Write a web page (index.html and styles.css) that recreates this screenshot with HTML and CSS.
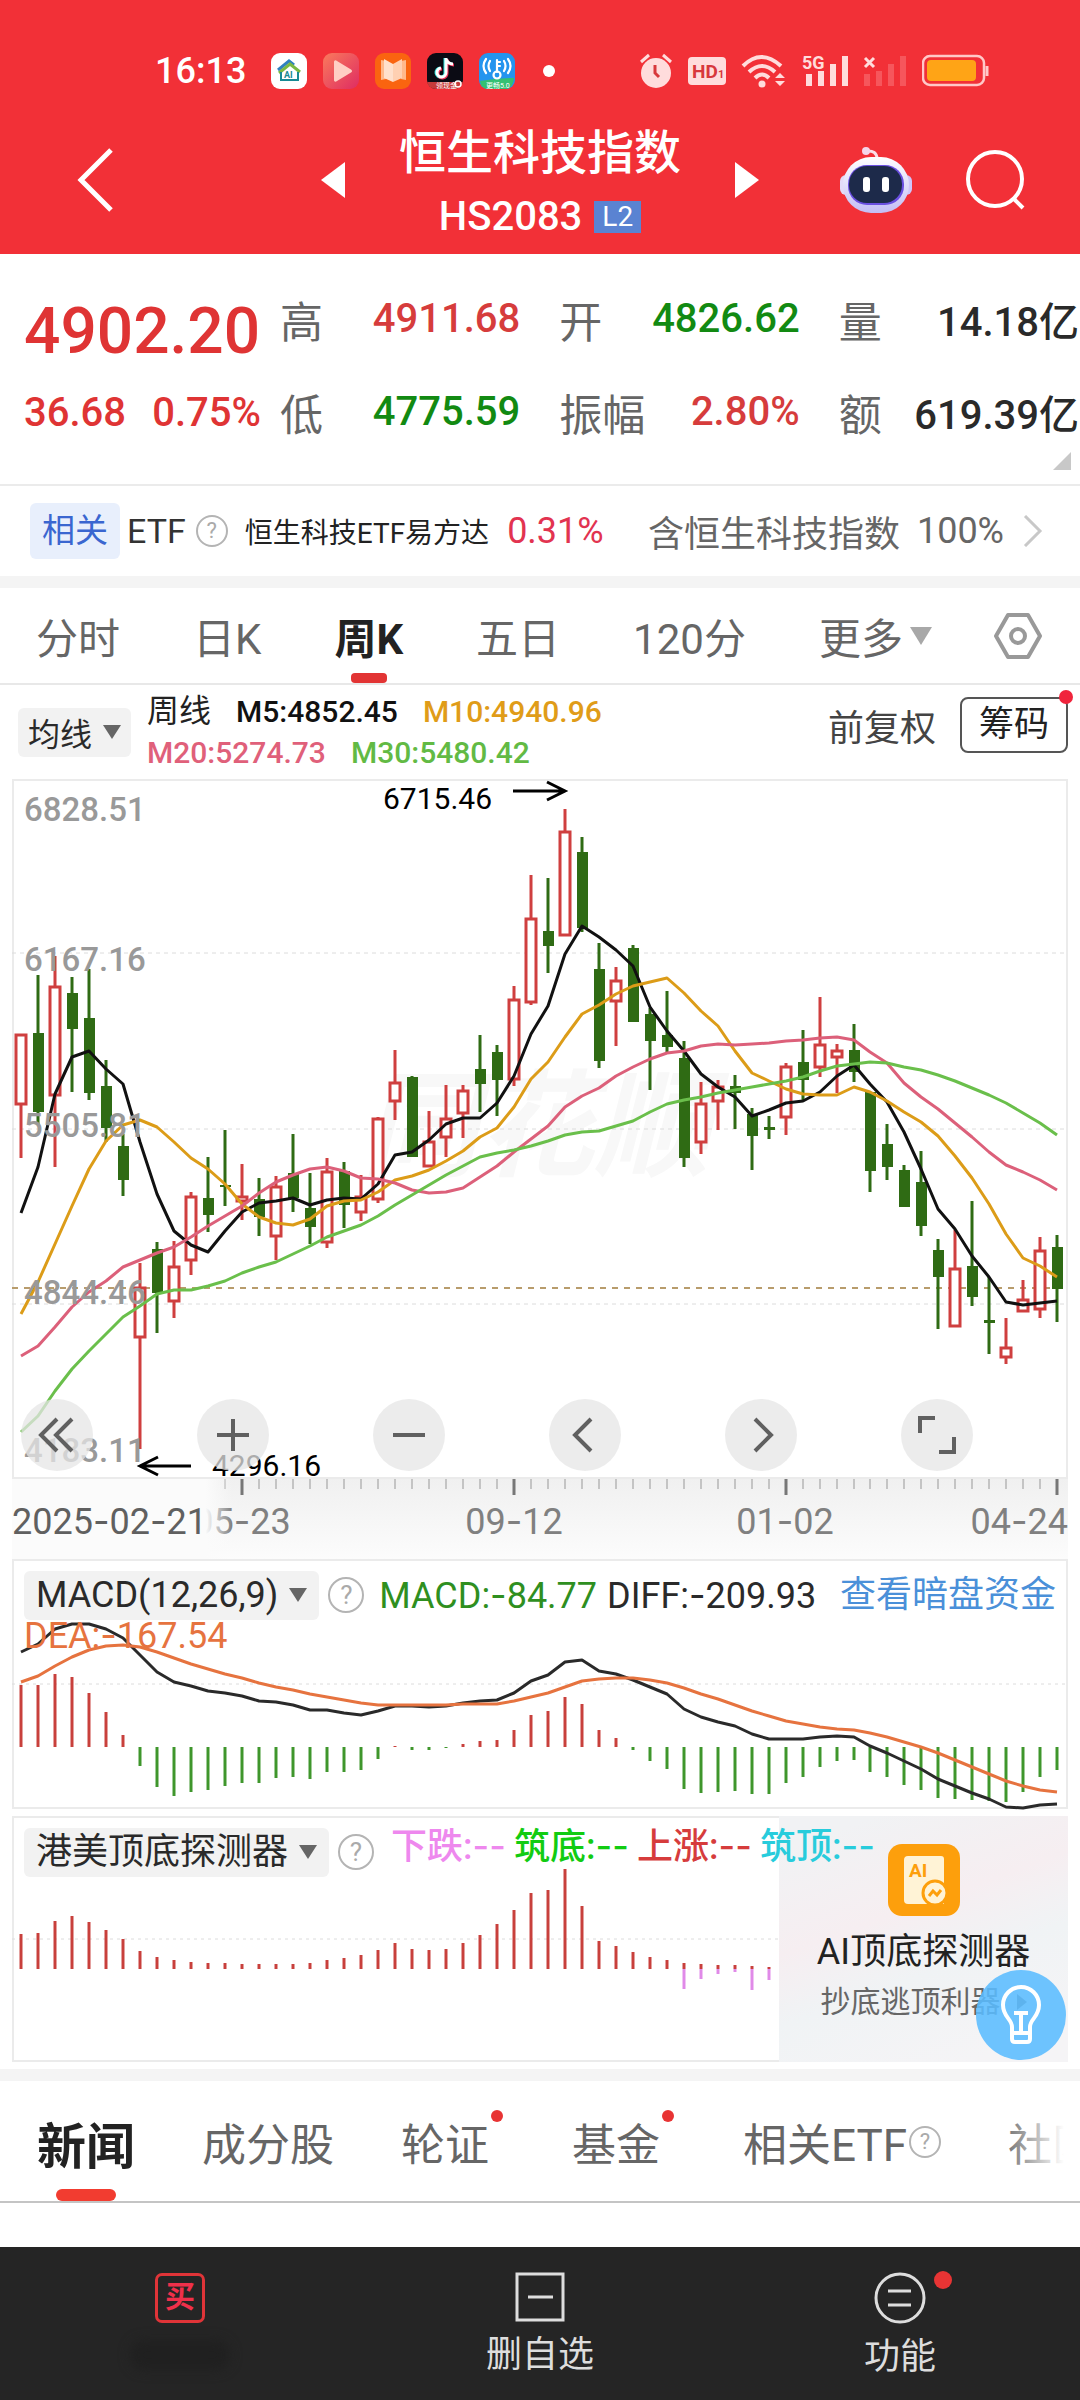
FILE: index.html
```html
<!DOCTYPE html>
<html lang="zh-CN">
<head>
<meta charset="utf-8">
<meta name="viewport" content="width=device-width, initial-scale=1">
<title>恒生科技指数 HS2083</title>
<link rel="stylesheet" href="styles.css">
</head>
<body>
<header class="header">
  <div class="status">
    <span class="status-time">16:13</span>
    <div class="status-apps">
      <svg viewBox="0 0 36 36" width="36" height="36"><rect width="36" height="36" rx="9" fill="#fff"/><path d="M7 17 18 8l5 4" fill="none" stroke="#2f80c0" stroke-width="3"/><path d="M8 20 19 11l10 8" fill="none" stroke="#7ab843" stroke-width="3"/><path d="M10 19v8h17v-8" fill="none" stroke="#178a94" stroke-width="2"/><text x="13" y="25" font-size="9" font-weight="700" fill="#178a94">AI</text></svg>
      <svg viewBox="0 0 36 36" width="36" height="36"><defs><linearGradient id="play" x1="0" y1="0" x2="1" y2="1"><stop offset="0" stop-color="#fa7a5c"/><stop offset="1" stop-color="#df2c62"/></linearGradient></defs><rect width="36" height="36" rx="9" fill="url(#play)"/><path d="M11 8.500q1-2 3-.6l14 8.500q2 1.600 0 3.200l-14 8.500q-2 1.400-3-.6z" fill="#ffcfc4"/></svg>
      <svg viewBox="0 0 36 36" width="36" height="36"><rect width="36" height="36" rx="9" fill="#fa6410"/><path d="M6 7l5 1v18l-5 1zM31 7l-5 1v18l5 1z" fill="#ffb98c"/><path d="M9 6l9 5v18l-9-4z" fill="#ffe0cc"/><path d="M27 6l-9 5v18l9-4z" fill="#ffd0b2"/></svg>
      <svg viewBox="0 0 36 36" width="36" height="36"><rect width="36" height="36" rx="9" fill="#0b0b14"/><g fill="none" stroke-width="3"><path d="M18 5v14a4.500 4.500 0 1 1-5-4M18 6q2 5 7 5" stroke="#2ee6e0"/><path d="M20 6v14a4.500 4.500 0 1 1-5-4M20 7q2 5 7 5" stroke="#f0355c"/><path d="M19 5v14a4.500 4.500 0 1 1-5-4M19 6q2 5 7 5" stroke="#fff"/></g><path d="M0 29h36q-2 7-9 7H9q-7 0-9-7z" fill="#c53a3a"/><text x="9" y="35" font-size="7" fill="#fff">领现金</text><circle cx="31" cy="31" r="3" fill="none" stroke="#fff" stroke-width="1.500"/></svg>
      <svg viewBox="0 0 36 36" width="36" height="36"><rect width="36" height="36" rx="9" fill="#2494ee"/><path d="M1 28q17-3 34-3-1 11-9 11H9q-7 0-8-8z" fill="#34c072"/><g fill="none" stroke="#fff" stroke-width="2.200" stroke-linecap="round"><path d="M11 8q-3 5 0 10M7 6q-5 7 0 14M25 8q3 5 0 10M29 6q5 7 0 14"/><path d="M18 7v12M18 9h3M18 13h3"/><circle cx="18" cy="22" r="3.500"/></g><text x="7" y="35" font-size="7" fill="#fff">更畅5.0</text></svg>
    </div>
    <span class="status-dot"></span>
    <div class="status-system">
      <svg viewBox="0 0 34 36" width="34" height="36"><circle cx="17" cy="20" r="15" fill="#ffdcdc"/><path d="M2 9l8-7M32 9l-8-7" stroke="#ffdcdc" stroke-width="3"/><path d="M16 12v8l4 4" fill="none" stroke="#d8383c" stroke-width="3"/></svg>
      <svg viewBox="0 0 38 36" width="38" height="36"><rect y="4" width="38" height="28" rx="4" fill="#ffdcdc"/><text x="4" y="25" font-size="19" font-weight="700" fill="#d8383c">HD</text><text x="30" y="25" font-size="11" font-weight="700" fill="#d8383c">1</text></svg>
      <svg viewBox="0 0 46 36" width="46" height="36"><g fill="none" stroke="#ffdcdc" stroke-width="4"><path d="M2 13q18-18 38 0M8 19q13-12 26 0M14 25q7-7 14 0"/></g><circle cx="21" cy="31" r="3.500" fill="#ffdcdc"/><path d="M34 25l5-5 5 5zM34 28l5 5 5-5z" fill="#ffdcdc"/></svg>
      <svg viewBox="0 0 46 36" width="46" height="36"><text x="0" y="16" font-size="18" font-weight="700" fill="#ffdcdc">5G</text><path d="M4 21h6v12H4zM16 18h6v15h-6zM28 11h6v22h-6zM40 3h6v30h-6z" fill="#ffdcdc"/></svg>
      <svg viewBox="0 0 44 36" width="44" height="36"><path d="M2 5l9 9M11 5l-9 9" stroke="#ffdcdc" stroke-width="3"/><path d="M1 21h6v12H1zM13 18h6v15h-6zM25 11h6v22h-6zM37 3h6v30h-6z" fill="#f6565c"/></svg>
      <svg viewBox="0 0 68 36" width="68" height="36"><rect x="1" y="3" width="61" height="29" rx="7" fill="none" stroke="#ffc8c8" stroke-width="2.500"/><rect x="5" y="7" width="49" height="21" rx="4" fill="#ffa416"/><path d="M65 13v10" stroke="#ffc8c8" stroke-width="3"/></svg>
    </div>
  </div>
  <nav class="nav">
    <div class="nav-left">
      <button class="bare" aria-label="返回"><svg viewBox="0 0 38 66" width="38" height="66"><path d="M34 3 4 33l30 30" fill="none" stroke="#fff" stroke-width="5"/></svg></button>
      <button class="bare" aria-label="上一个"><svg viewBox="0 0 24 36" width="24" height="36"><path d="M24 0v36L0 18z" fill="#fff"/></svg></button>
    </div>
    <div class="nav-title">
      <h1>恒生科技指数</h1>
      <p>HS2083 <span class="level">L2</span></p>
    </div>
    <div class="nav-right">
      <button class="bare" aria-label="下一个"><svg viewBox="0 0 24 36" width="24" height="36"><path d="M0 0v36l24-18z" fill="#fff"/></svg></button>
      <div class="nav-tools">
        <button class="bare" aria-label="智能助手"><svg viewBox="0 0 72 66" width="72" height="66"><defs><linearGradient id="bot" x1="0" y1="0" x2="0" y2="1"><stop offset="0" stop-color="#fff"/><stop offset="1" stop-color="#c3bdf5"/></linearGradient></defs><path d="M26 4q11-1 11 8" fill="none" stroke="#fbdfe8" stroke-width="3"/><circle cx="26" cy="4" r="4" fill="#f5d5ea"/><rect x="0" y="28" width="12" height="20" rx="6" fill="#e2daf8"/><rect x="60" y="28" width="12" height="20" rx="6" fill="#cfc6fa"/><rect x="3" y="10" width="66" height="56" rx="28" fill="url(#bot)"/><rect x="8" y="18" width="56" height="40" rx="19" fill="#6a4fe0"/><rect x="9" y="19" width="53" height="37" rx="18" fill="#1d2a4a"/><rect x="23" y="30" width="7" height="15" rx="3" fill="#fff"/><rect x="42" y="30" width="7" height="15" rx="3" fill="#fff"/></svg></button>
        <button class="bare" aria-label="搜索"><svg viewBox="0 0 60 60" width="60" height="60"><circle cx="29" cy="29" r="27" fill="none" stroke="#fff" stroke-width="4"/><path d="M47 48l10 10" stroke="#fff" stroke-width="4"/></svg></button>
      </div>
    </div>
  </nav>
</header>

<main class="main">
<section class="quote">
  <div class="price">
    <strong>4902.20</strong>
    <p><span>36.68</span><span>0.75%</span></p>
  </div>
  <dl class="stats">
    <div><dt>高</dt><dd class="up">4911.68</dd></div>
    <div><dt>开</dt><dd class="down">4826.62</dd></div>
    <div><dt>量</dt><dd>14.18亿</dd></div>
    <div><dt>低</dt><dd class="down">4775.59</dd></div>
    <div><dt>振幅</dt><dd class="up">2.80%</dd></div>
    <div><dt>额</dt><dd>619.39亿</dd></div>
  </dl>
  <svg class="quote-corner" viewBox="0 0 18 18" width="18" height="18"><path d="M18 0v18H0z" fill="#c8c8c8"/></svg>
</section>

<section class="etf">
  <span class="etf-chip">相关</span>
  <span class="etf-label">ETF</span>
  <span class="help help-s">?</span>
  <a class="etf-name" href="#">恒生科技ETF易方达</a>
  <span class="etf-change">0.31%</span>
  <span class="etf-share">含恒生科技指数</span>
  <span class="etf-share">100%</span>
  <svg class="etf-arrow" viewBox="0 0 20 32" width="20" height="32"><path d="M2 1l15 15L2 31" fill="none" stroke="#c8c8c8" stroke-width="3"/></svg>
</section>

<nav class="periods">
  <button class="tab">分时</button>
  <button class="tab">日K</button>
  <button class="tab tab-on">周K</button>
  <button class="tab">五日</button>
  <button class="tab">120分</button>
  <button class="tab">更多<svg viewBox="0 0 22 18" width="22" height="18"><path d="M0 0h22L11 18z" fill="#a8a8a8"/></svg></button>
  <button class="bare gear" aria-label="设置"><svg viewBox="0 0 50 48" width="50" height="48"><path d="M15 3h20l12 21-12 21H15L3 24z" fill="none" stroke="#999" stroke-width="4" stroke-linejoin="round"/><circle cx="25" cy="24" r="7" fill="none" stroke="#999" stroke-width="4"/></svg></button>
</nav>

<section class="legend">
  <button class="chip chip-s">均线<svg viewBox="0 0 18 14" width="18" height="14"><path d="M0 0h18L9 14z" fill="#666"/></svg></button>
  <div class="averages">
    <p><span class="cycle">周线</span><span class="m5">M5:4852.45</span><span class="m10">M10:4940.96</span></p>
    <p><span class="m20">M20:5274.73</span><span class="m30">M30:5480.42</span></p>
  </div>
  <button class="bare adjust">前复权</button>
  <button class="chips-btn">筹码<i class="dot"></i></button>
</section>

<section class="kline">
  <svg id="kline" class="plot" viewBox="0 0 1056 700" role="img" aria-label="周K线图">
    <rect x="1" y="1" width="1054" height="698" fill="none" stroke="#ebebeb" stroke-width="2"/>
    <text class="watermark" x="350" y="388">同花顺</text>
    <path d="M0 174h1056M0 350h1056M0 525h1056" stroke="#dcdcdc" stroke-dasharray="4 4"/>
    <path d="M0 509h1056" stroke="#b89c6c" stroke-width="2" stroke-dasharray="6 6"/>
    <g id="candles"></g>
    <g id="averages"></g>
    <g class="scale"><text x="12" y="42">6828.51</text><text x="12" y="192">6167.16</text><text x="12" y="358">5505.81</text><text x="12" y="525">4844.46</text><text x="12" y="683">4183.11</text></g>
    <g class="mark"><text x="371" y="30">6715.46</text><text x="200" y="697">4296.16</text></g>
    <path d="M501 12h51M535 3l18 9-18 9M179 687h-50M146 678l-18 9 18 9" fill="none" stroke="#000" stroke-width="3"/>
  </svg>
  <div class="controls">
    <button aria-label="最早"><svg viewBox="0 0 36 36"><path d="M18 2 2 18l16 16M33 2 17 18l16 16"/></svg></button>
    <button aria-label="放大"><svg viewBox="0 0 36 36"><path d="M2 18h32M18 2v32"/></svg></button>
    <button aria-label="缩小"><svg viewBox="0 0 36 36"><path d="M2 18h32"/></svg></button>
    <button aria-label="左移"><svg viewBox="0 0 36 36"><path d="M24 2 8 18l16 16"/></svg></button>
    <button aria-label="右移"><svg viewBox="0 0 36 36"><path d="M12 2l16 16-16 16"/></svg></button>
    <button aria-label="全屏"><svg viewBox="0 0 36 36"><path d="M1 16V1h15M35 20v15H20"/></svg></button>
  </div>
</section>

<section class="axis">
  <svg class="plot" viewBox="0 0 1056 80" role="img" aria-label="日期">
    <defs>
      <linearGradient id="shade" x1="0" y1="0" x2="0" y2="1"><stop offset="0" stop-color="#f0f0f0"/><stop offset="1" stop-color="#fcfcfc"/></linearGradient>
      <linearGradient id="fade"><stop offset="0.880" stop-color="#fbfbfb"/><stop offset="1" stop-color="#fbfbfb" stop-opacity="0"/></linearGradient>
    </defs>
    <rect width="1056" height="80" fill="url(#shade)"/>
    <g id="ticks"></g>
    <text class="date" x="230" y="55" text-anchor="middle">05<tspan class="dash">-</tspan>23</text>
    <text class="date" x="502" y="55" text-anchor="middle">09<tspan class="dash">-</tspan>12</text>
    <text class="date" x="773" y="55" text-anchor="middle">01<tspan class="dash">-</tspan>02</text>
    <text class="date" x="1056" y="55" text-anchor="end">04<tspan class="dash">-</tspan>24</text>
    <rect width="220" height="80" fill="url(#fade)"/>
    <text class="date date-first" x="0" y="55">2025<tspan class="dash">-</tspan>02<tspan class="dash">-</tspan>21</text>
  </svg>
</section>

<section class="panel">
  <svg class="plot" viewBox="0 0 1056 250" role="img" aria-label="MACD">
    <rect x="1" y="1" width="1054" height="248" fill="none" stroke="#ebebeb" stroke-width="2"/>
    <path d="M0 125h1056" stroke="#dcdcdc" stroke-dasharray="3 4"/>
    <g id="macd"></g>
  </svg>
  <div class="panel-head">
    <button class="chip">MACD(12,26,9)<svg viewBox="0 0 18 14" width="18" height="14"><path d="M0 0h18L9 14z" fill="#666"/></svg></button>
    <span class="help">?</span>
    <span class="macd-val">MACD:<span class="dash">-</span>84.77</span>
    <span class="diff-val">DIFF:<span class="dash">-</span>209.93</span>
    <a class="dark-pool" href="#">查看暗盘资金</a>
  </div>
  <p class="dea-val">DEA:<span class="dash">-</span>167.54</p>
</section>

<section class="panel">
  <svg class="plot" viewBox="0 0 1056 246" role="img" aria-label="港美顶底探测器">
    <rect x="1" y="1" width="1054" height="244" fill="none" stroke="#ebebeb" stroke-width="2"/>
    <path d="M0 123h767" stroke="#dcdcdc" stroke-dasharray="3 4"/>
    <g id="detector"></g>
  </svg>
  <a class="ai-card" href="#">
    <svg viewBox="0 0 72 72" width="72" height="72"><rect width="72" height="72" rx="14" fill="#fd9f0c"/><path d="M20 12h33q3 0 3 3v45H20q-4 0-4-4V16q0-4 4-4z" fill="#fff3d6"/><text x="21" y="33" font-size="19" font-weight="700" fill="#fd9f0c">AI</text><circle cx="47" cy="49" r="12" fill="#fff3d6" stroke="#fd9f0c" stroke-width="3"/><path d="M41 52l4-5 4 4 4-5" fill="none" stroke="#fd9f0c" stroke-width="3"/></svg>
    <strong>AI顶底探测器</strong>
    <span>抄底逃顶利器<svg viewBox="0 0 10 16" width="10" height="16"><path d="M0 0l10 8-10 8z" fill="#777"/></svg></span>
  </a>
  <div class="panel-head">
    <button class="chip">港美顶底探测器<svg viewBox="0 0 18 14" width="18" height="14"><path d="M0 0h18L9 14z" fill="#666"/></svg></button>
    <span class="help">?</span>
    <p class="signals"><span class="s1">下跌:<b>--</b></span><span class="s2">筑底:<b>--</b></span><span class="s3">上涨:<b>--</b></span><span class="s4">筑顶:<b>--</b></span></p>
  </div>
  <button class="bulb" aria-label="提示"><svg viewBox="0 0 42 60" width="42" height="60"><path d="M12 42c0-8-9-10-9-22a18 18 0 0 1 36 0c0 12-9 14-9 22v12q0 3-3 3H15q-3 0-3-3zM12 48h18M14 28h14M21 28v18" fill="none" stroke="#fff" stroke-width="4"/></svg></button>
</section>

<nav class="sections">
  <button class="tab tab-on">新闻</button>
  <button class="tab">成分股</button>
  <button class="tab tab-new">轮证<i class="dot"></i></button>
  <button class="tab tab-new">基金<i class="dot"></i></button>
  <button class="tab">相关ETF<span class="help help-s">?</span></button>
  <button class="tab">社区</button>
</nav>
</main>

<footer class="bottom">
  <button class="bottom-item"><span class="buy">买</span><span class="smudge"></span></button>
  <button class="bottom-item"><svg viewBox="0 0 50 50" width="50" height="50"><path d="M2 2h46v46H2zM13 25h25" fill="none" stroke="#ddd" stroke-width="3"/></svg><span>删自选</span></button>
  <button class="bottom-item"><span class="round"><svg viewBox="0 0 52 52" width="52" height="52"><circle cx="26" cy="26" r="24" fill="none" stroke="#ddd" stroke-width="3"/><path d="M14 19h23M14 33h23" stroke="#ddd" stroke-width="3"/></svg><i class="dot"></i></span><span>功能</span></button>
</footer>
<script src="chart.js"></script>
</body>
</html>
```
FILE: styles.css
```css
* { box-sizing: border-box; }
body {
  margin: 0;
  min-height: 100vh;
  display: flex;
  flex-direction: column;
  background: #fff;
  color: #333;
  font-family: Roboto, "Noto Sans CJK SC", sans-serif;
  font-size: 36px;
  overflow-x: hidden;
}
h1, p, dl, dd { margin: 0; }
button { font: inherit; color: inherit; border: 0; background: none; padding: 0; white-space: nowrap; }
a { color: inherit; text-decoration: none; }
svg { display: block; }
.bare { display: block; }
.dot { position: absolute; width: 14px; height: 14px; border-radius: 50%; background: #e83434; }
.dash { font-family: Inter, sans-serif; }

/* Header */
.header { background: #f23037; color: #fff; }
.status { display: flex; align-items: center; padding: 50px 90px 0 155px; height: 92px; }
.status-time { font-weight: 500; }
.status-apps { display: flex; gap: 16px; margin-left: 25px; }
.status-dot { width: 12px; height: 12px; border-radius: 50%; background: #fff; margin-left: 28px; }
.status-system { display: flex; gap: 15px; margin-left: auto; }
.nav { display: grid; grid-template-columns: 1fr 390px 1fr; align-items: center; padding-top: 14px; height: 162px; }
.nav-left { display: flex; align-items: center; justify-content: space-between; padding-left: 77px; }
.nav-title { display: flex; flex-direction: column; align-items: center; gap: 14px; white-space: nowrap; }
.nav-title h1 { font-size: 47px; line-height: 60px; font-weight: 500; }
.nav-title p { display: flex; align-items: center; gap: 12px; font-size: 40px; line-height: 40px; font-weight: 500; }
.level { background: #5a83d2; font-size: 28px; line-height: 32px; padding: 0 8px; font-weight: 400; }
.nav-right { display: flex; align-items: center; justify-content: space-between; padding-right: 54px; }
.nav-tools { display: flex; align-items: center; gap: 54px; }

/* Quote */
.quote { position: relative; display: grid; grid-template-columns: 237px 1fr; gap: 19px; padding: 36px 1px 0 24px; height: 232px; border-bottom: 2px solid #ebebeb; }
.price { color: #df3434; font-weight: 500; }
.price strong { display: block; font-size: 64px; line-height: 84px; font-weight: 500; }
.price p { display: flex; justify-content: space-between; font-size: 40px; line-height: 78px; }
.stats { display: grid; grid-template-columns: 1fr 1fr 1fr; column-gap: 39px; grid-auto-rows: 93px; margin-top: -18px; }
.stats div { display: flex; justify-content: space-between; align-items: center; white-space: nowrap; }
.stats dt { font-size: 43px; color: #666; }
.stats dd { font-size: 40px; font-weight: 500; color: #2a2a2a; }
.stats .up { color: #d63c3c; }
.stats .down { color: #128a12; }
.quote-corner { position: absolute; right: 9px; bottom: 14px; }

/* Related fund */
.etf { display: flex; align-items: center; height: 90px; padding: 0 37px 0 30px; white-space: nowrap; }
.etf-chip { background: #e8effc; color: #3a66d0; font-size: 33px; line-height: 56px; padding: 0 12px; border-radius: 6px; }
.etf-label { margin-left: 7px; font-size: 34px; }
.help { display: flex; align-items: center; justify-content: center; width: 36px; height: 36px; border: 2px solid #b4b4b4; border-radius: 50%; color: #aaa; font-size: 26px; line-height: 26px; flex: none; }
.help-s { width: 32px; height: 32px; font-size: 22px; }
.etf .help { margin-left: 10px; }
.etf-name { margin-left: 17px; font-size: 28px; color: #222; }
.etf-change { margin-left: 18px; color: #e23350; }
.etf-share { margin-left: auto; color: #666; }
.etf-share + .etf-share { margin-left: 17px; }
.etf-arrow { margin-left: 19px; }

/* Period tabs */
.periods { display: flex; gap: 73px; align-items: center; height: 109px; padding: 0 34px 0 36px; border-top: 12px solid #f4f4f4; border-bottom: 2px solid #e8e8e8; }
.gear { margin-left: auto; margin-right: 0; }
.tab { position: relative; color: #666; font-size: 42px; height: 100%; display: flex; align-items: center; flex: none; }
.tab-on { color: #222; font-weight: 700; }
.tab-on::after { content: ""; position: absolute; left: 50%; bottom: 0; width: 36px; height: 10px; margin-left: -18px; border-radius: 4px; background: #e23434; }
.periods .tab svg { margin-left: 7px; }
.periods { column-gap: 73px; }
.periods .gear { margin-left: -12px; }

/* Average legend */
.legend { display: flex; align-items: center; height: 94px; padding: 0 12px 0 18px; }
.chip { display: flex; align-items: center; gap: 11px; height: 49px; padding: 0 12px; background: #f2f2f2; border-radius: 6px; color: #2a2a2a; }
.chip-s { font-size: 32px; padding: 0 10px; }
.averages { margin-left: 16px; font-size: 30px; font-weight: 500; }
.averages p { display: flex; align-items: center; gap: 25px; line-height: 41px; }
.cycle { font-size: 32px; font-weight: 400; color: #222; }
.m5 { color: #111; }
.m10 { color: #e09c18; }
.m20 { color: #e0607a; }
.m30 { color: #62ba44; }
.adjust { margin-left: auto; margin-bottom: 14px; color: #444; }
.chips-btn { position: relative; margin-left: 24px; margin-bottom: 14px; width: 108px; height: 56px; border: 2px solid #555; border-radius: 8px; font-size: 35px; line-height: 50px; color: #222; }
.chips-btn .dot { top: -9px; right: -7px; background: #f0243c; }

/* Charts */
.plot { width: 100%; height: auto; overflow: visible; }
.kline { position: relative; margin: 0 12px; }
.watermark { font-size: 116px; font-weight: 700; font-style: italic; fill: #f8f8f8; }
.scale { font-size: 33px; font-weight: 500; fill: #999; }
.mark { font-size: 30px; fill: #000; }
.controls { position: absolute; left: 9px; right: 95px; bottom: 8px; display: flex; justify-content: space-between; }
.controls button { width: 72px; height: 72px; border-radius: 50%; background: rgba(230, 230, 230, 0.750); display: grid; place-items: center; }
.controls svg { width: 36px; height: 36px; fill: none; stroke: #606060; stroke-width: 4; overflow: visible; }
.axis { margin: 0 12px; }
.date { font-size: 36px; fill: #808080; }
.date-first { fill: #606060; }
.panel { position: relative; margin: 0 12px 7px; white-space: nowrap; }
.panel-head { position: absolute; left: 12px; right: 12px; top: 12px; display: flex; align-items: center; height: 48px; line-height: 48px; }
.panel-head .help { margin-left: 9px; }
.macd-val { margin-left: 15px; color: #2f8f1f; }
.diff-val { margin-left: 10px; color: #2a2a2a; }
.dark-pool { margin-left: auto; color: #4a90d9; }
.dea-val { position: absolute; left: 12px; top: 56px; line-height: 40px; color: #e6733f; }
.signals { display: flex; margin-left: 17px; margin-top: -12px; font-weight: 500; }
.signals span { width: 123px; }
.signals b { font-family: Inter, sans-serif; font-weight: 500; }
.s1 { color: #ee88ee; }
.s2 { color: #12cc12; }
.s3 { color: #d63c3c; }
.s4 { color: #28ccdc; }
.ai-card { position: absolute; right: 0; top: 0; bottom: 0; width: 289px; padding-top: 28px; display: flex; flex-direction: column; align-items: center; background: linear-gradient(160deg, #f1f2f4 10%, #f6eef1 40%, #f0f3f5 60%, #f5f4f6 90%); }
.ai-card strong { font-weight: 400; color: #222; line-height: 44px; margin-top: 14px; }
.ai-card span { display: flex; align-items: center; gap: 16px; font-size: 30px; line-height: 40px; color: #666; margin-top: 8px; }
.bulb { position: absolute; right: 2px; bottom: 2px; width: 90px; height: 90px; border-radius: 50%; background: rgba(90, 188, 255, 0.880); display: grid; place-items: center; }

/* Content tabs */
.sections { position: relative; display: flex; height: 134px; padding: 2px 0 0 37px; gap: 67px; border-top: 12px solid #f4f4f4; border-bottom: 2px solid #c4c4c4; overflow: hidden; }
.sections::after { content: ""; position: absolute; top: 0; right: 0; bottom: 0; width: 80px; background: linear-gradient(to right, rgba(255, 255, 255, 0), #fff 80%); }
.sections .tab { font-size: 44px; }
.sections .tab-on { font-size: 49px; }
.sections .tab-on::after { width: 60px; height: 12px; margin-left: -30px; border-radius: 6px; background: #f23c30; }
.sections .tab-new { padding-right: 16px; }
.sections .dot { top: 27px; right: 2px; width: 12px; height: 12px; }
.sections .help { margin-left: 2px; }

/* Bottom bar */
.bottom { margin-top: auto; height: 153px; background: #252525; color: #ddd; display: grid; grid-template-columns: 1fr 1fr 1fr; }
.bottom-item { display: flex; flex-direction: column; align-items: center; padding-top: 25px; line-height: 52px; gap: 7px; }
.buy { width: 50px; height: 50px; margin-top: 1px; border: 3px solid #e03438; border-radius: 7px; color: #f0304a; font-size: 30px; line-height: 42px; font-weight: 700; }
.smudge { width: 100px; height: 30px; margin-top: 10px; border-radius: 15px; background: #202020; filter: blur(6px); }
.round { position: relative; }
.round .dot { width: 18px; height: 18px; right: -26px; top: -1px; }
```
FILE: chart.js
```js
// Horizontal position of the n-th week in a plot 1056 units wide.
const x = n => Math.round(9 + n * 16.99);

const add = (id, markup) => {
  document.getElementById(id).innerHTML += markup;
};

const curve = (values, color) =>
  `<polyline points="${values.map((v, n) => `${x(n)},${v}`).join(' ')}" fill="none" stroke="${color}" stroke-width="3" stroke-linejoin="round"/>`;

const bar = (n, from, to, color) =>
  `<path d="M${x(n)} ${from}V${to}" stroke="${color}" stroke-width="3"/>`;

// direction, high, body top, body bottom, low
const candles = [
  ['r',255,255,326,379],['g',196,254,333,345],['r',177,207,317,388],['g',198,214,250,313],['g',190,239,314,321],
  ['g',281,307,349,363],['g',355,367,401,417],['r',484,508,559,670],['g',463,470,514,554],['r',462,487,523,539],
  ['r',413,417,482,496],['g',378,419,436,453],['g',351,406,408,427],['r',385,417,423,441],['g',399,420,438,457],
  ['r',397,407,458,481],['g',355,394,419,433],['g',394,429,448,465],['r',379,392,464,469],['g',383,392,426,449],
  ['r',396,417,434,442],['r',338,339,421,424],['r',271,303,323,341],['g',297,298,378,378],['r',332,362,388,388],
  ['r',306,339,359,378],['r',306,311,335,359],['g',256,290,305,333],['g',266,273,301,337],['r',207,220,301,307],
  ['r',96,139,224,226],['g',99,152,167,194],['r',30,52,157,157],['g',58,73,149,153],['g',164,190,282,289],
  ['r',188,201,223,267],['g',166,169,243,243],['g',229,235,262,311],['g',212,256,268,273],['g',262,279,379,388],
  ['r',303,324,364,375],['r',301,307,323,351],['g',296,307,314,350],['g',329,335,357,391],['g',337,348,351,360],
  ['r',284,287,339,356],['g',251,283,301,321],['r',218,265,289,298],['r',265,271,279,314],['g',245,271,293,303],
  ['g',313,313,392,413],['g',345,365,388,401],['g',386,391,428,428],['g',372,403,447,457],['g',460,471,498,550],
  ['r',451,489,548,548],['g',422,487,518,527],['g',498,541,544,575],['r',539,568,579,585],['r',501,520,533,533],
  ['r',458,471,531,539],['g',456,468,510,543]
];

add('candles', candles.map(([dir, high, top, bottom, low], n) => {
  const c = x(n);
  return dir === 'g'
    ? `<path d="M${c} ${high}V${low}" stroke="#2f6b14" stroke-width="3"/><rect x="${c - 5}" y="${top}" width="11" height="${bottom - top}" fill="#2f6b14"/>`
    : `<path d="M${c} ${high}V${top}M${c} ${bottom}V${low}" stroke="#cf3f3f" stroke-width="3"/><rect x="${c - 5}" y="${top + 1}" width="10" height="${bottom - top - 2}" fill="#fff" stroke="#cf3f3f" stroke-width="3"/>`;
}).join(''));

const m30 = [653,637,612,590,572,555,538,527,515,511,511,507,502,494,488,483,475,467,458,452,446,437,426,416,406,396,387,378,374,371,367,362,356,353,352,347,342,333,325,321,318,314,311,308,305,302,298,292,287,285,283,284,288,291,296,302,309,316,324,334,344,356];
const m20 = [577,567,548,528,513,502,488,481,474,468,458,447,437,427,414,403,396,390,388,392,399,400,404,411,414,413,409,398,387,373,360,347,328,317,309,297,288,280,274,272,267,265,266,265,264,262,261,259,258,261,273,284,304,318,330,344,358,373,386,393,401,411];
const m10 = [535,503,465,427,390,362,346,341,348,363,379,390,405,425,438,444,446,440,427,422,421,413,401,397,391,382,372,358,349,328,300,283,258,235,226,215,207,203,199,214,232,247,272,294,302,310,315,316,316,308,313,322,333,343,357,377,399,425,455,479,487,498];
const m5 = [434,388,315,278,272,290,305,363,415,452,466,473,452,433,424,422,419,426,421,419,420,405,376,373,361,345,339,339,324,297,255,227,175,147,158,171,187,228,252,272,295,308,318,337,331,324,322,313,297,286,305,323,353,390,430,450,477,498,523,526,524,522];
add('averages', curve(m5, '#111') + curve(m10, '#dc9c18') + curve(m20, '#dc607a') + curve(m30, '#6abf4b'));

let ticks = '';
for (let n = 12; n < 62; n++) {
  const major = [13, 29, 45, 61].includes(n);
  ticks += `<path d="M${x(n)} 0v${major ? 16 : 10}" stroke="${major ? '#777' : '#c4c4c4'}" stroke-width="${major ? 3 : 2}"/>`;
}
add('ticks', ticks);

const macd = [126,126,115,118,134,153,176,207,228,237,233,231,227,224,224,219,218,220,213,213,211,200,187,191,191,189,185,182,181,171,156,152,138,145,171,179,191,202,210,230,234,233,232,235,235,224,218,208,202,201,213,218,226,231,239,240,241,242,243,233,218,211];
const diff = [93,85,70,65,65,70,79,96,113,123,127,132,134,137,142,143,146,151,151,154,156,152,147,147,148,147,144,142,141,134,122,116,103,101,112,115,121,128,135,150,158,163,167,175,180,180,180,178,177,178,187,194,202,210,220,227,234,240,248,249,246,245];
const dea = [123,117,107,98,91,87,86,88,93,99,105,110,115,119,124,128,131,135,138,141,144,146,146,146,146,146,145,145,145,142,138,134,128,122,120,119,119,121,124,129,135,140,146,152,157,162,165,168,170,171,174,178,183,188,194,201,208,215,222,227,231,233];
add('macd', macd.map((v, n) => bar(n, 188, v, v < 188 ? '#c8403c' : '#3f962c')).join('') + curve(diff, '#2a2a2a') + curve(dea, '#e6733f'));

const detector = [118,117,105,100,106,114,123,135,141,144,146,147,147,148,148,148,148,147,144,142,139,134,127,133,134,133,127,119,108,94,77,74,53,90,125,130,136,141,144,147,148,149,149,150,151];
const falling = { 39: 173, 40: 163, 41: 158, 42: 156, 43: 174, 44: 164 };
add('detector', detector.map((v, n) => bar(n, 153, v, '#c8403c')).join('') +
  Object.entries(falling).map(([n, v]) => bar(Number(n), 153, v, '#e08ae8')).join(''));
```
